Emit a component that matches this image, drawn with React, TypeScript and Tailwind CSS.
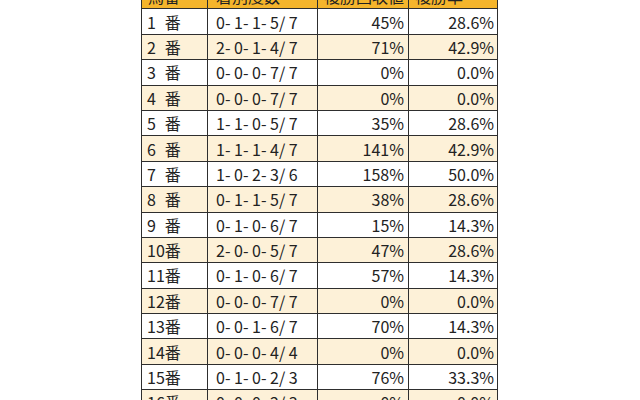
const rows: [string, string, string, string][] = [
  ["1\u2007番", "0- 1- 1- 5/ 7", "45%", "28.6%"],
  ["2\u2007番", "2- 0- 1- 4/ 7", "71%", "42.9%"],
  ["3\u2007番", "0- 0- 0- 7/ 7", "0%", "0.0%"],
  ["4\u2007番", "0- 0- 0- 7/ 7", "0%", "0.0%"],
  ["5\u2007番", "1- 1- 0- 5/ 7", "35%", "28.6%"],
  ["6\u2007番", "1- 1- 1- 4/ 7", "141%", "42.9%"],
  ["7\u2007番", "1- 0- 2- 3/ 6", "158%", "50.0%"],
  ["8\u2007番", "0- 1- 1- 5/ 7", "38%", "28.6%"],
  ["9\u2007番", "0- 1- 0- 6/ 7", "15%", "14.3%"],
  ["10番", "2- 0- 0- 5/ 7", "47%", "28.6%"],
  ["11番", "0- 1- 0- 6/ 7", "57%", "14.3%"],
  ["12番", "0- 0- 0- 7/ 7", "0%", "0.0%"],
  ["13番", "0- 0- 1- 6/ 7", "70%", "14.3%"],
  ["14番", "0- 0- 0- 4/ 4", "0%", "0.0%"],
  ["15番", "0- 1- 0- 2/ 3", "76%", "33.3%"],
  ["16番", "0- 0- 0- 2/ 3", "0%", "0.0%"],
]

const cell = "border-[1.5px] border-[#2e2e2e] h-[25.4px] py-0 leading-none"
const head = `${cell} text-left font-normal whitespace-nowrap overflow-hidden`

export default function App() {
  return (
    <div
      className="w-[640px] h-[400px] overflow-hidden bg-white text-[16px] text-[#222]"
      style={{ fontFamily: '"Noto Sans CJK JP", "Noto Sans", sans-serif' }}
    >
      <table className="ml-[141px] -mt-[17px] border-collapse table-fixed w-[356px]">
        <colgroup>
          <col className="w-[66px]" />
          <col className="w-[110px]" />
          <col className="w-[91px]" />
          <col className="w-[89px]" />
        </colgroup>
        <thead>
          <tr className="bg-[#f5b52c]">
            <th className={`${head} px-[6px]`}>馬番</th>
            <th className={`${head} px-[8px]`}>着別度数</th>
            <th className={`${head} px-[6px]`}>複勝回収値</th>
            <th className={`${head} px-[6px]`}>複勝率</th>
          </tr>
        </thead>
        <tbody>
          {rows.map((r, i) => (
            <tr key={i} className={i % 2 === 0 ? "bg-white" : "bg-[#fdf1d8]"}>
              <td className={`${cell} pl-[5px] whitespace-pre`}>{r[0]}</td>
              <td className={`${cell} pl-[8px] whitespace-pre`}>{r[1]}</td>
              <td className={`${cell} text-right pr-[4px]`}>{r[2]}</td>
              <td className={`${cell} text-right pr-[3px]`}>{r[3]}</td>
            </tr>
          ))}
        </tbody>
      </table>
    </div>
  )
}
